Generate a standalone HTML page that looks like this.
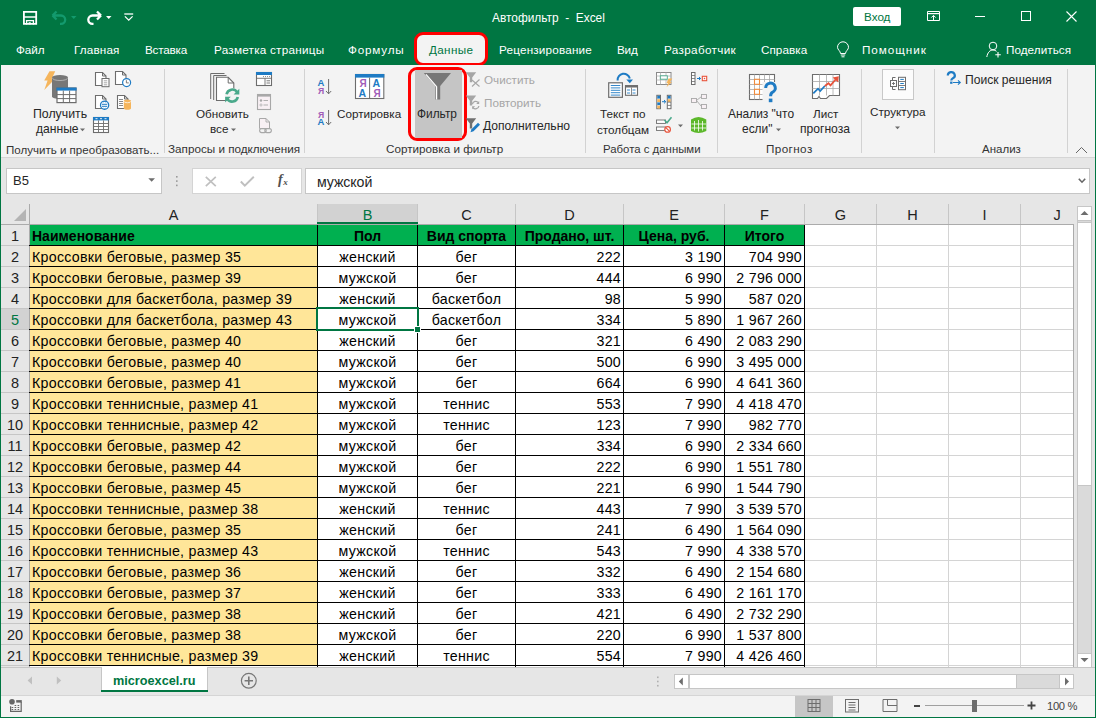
<!DOCTYPE html>
<html><head><meta charset="utf-8">
<style>
*{margin:0;padding:0;box-sizing:border-box}
html,body{width:1096px;height:718px;overflow:hidden;background:#e6e6e6;font-family:"Liberation Sans",sans-serif}
.a{position:absolute}
svg{position:absolute;overflow:visible}
.tt{position:absolute;color:#fff;font-size:11.7px;white-space:nowrap;line-height:14px}
.rt{position:absolute;color:#262626;font-size:11.7px;white-space:nowrap;line-height:14px}
.gl{position:absolute;color:#333;font-size:11.7px;white-space:nowrap;line-height:14px}
.sep{position:absolute;width:1px;top:69px;height:84px;background:#d2d2d2}
.ch{position:absolute;top:204px;height:20px;text-align:center;font-size:14.5px;color:#222;line-height:23px;border-right:1px solid #c6c6c6}
.rh{position:absolute;left:1px;width:28px;height:21px;text-align:center;font-size:14.5px;color:#222;line-height:23px;border-bottom:1px solid #c6c6c6}
.cell{position:absolute;height:20px;font-size:14.2px;letter-spacing:0.28px;line-height:23px;white-space:nowrap;color:#000;overflow:hidden}
</style></head><body>
<!-- title bar -->
<div class="a" style="left:0;top:0;width:1096px;height:65px;background:#007642"></div>
<svg style="left:22px;top:10px" width="16" height="16" viewBox="22 10 16 16"><path d="M23.9 11.9H36.2V23.9H23.9Z" fill="none" stroke="#fff" stroke-width="1.8"/><path d="M23.5 17H36.6" stroke="#fff" stroke-width="1.5"/><path d="M26.6 24.4V20.65H33.4V24.4" fill="none" stroke="#fff" stroke-width="1.3"/><path d="M28.7 22.2H30.7V24.4H28.7Z" fill="#fff"/></svg>
<svg style="left:51px;top:10px" width="18" height="16" viewBox="0 0 18 16"><path d="M1.5 5.5L5.5 1.5M1.5 5.5L5.5 9.5M1.5 5.5H10A4.2 4.2 0 0 1 10 13.9H9" fill="none" stroke="#139a6e" stroke-width="2.3"/></svg>
<svg style="left:71px;top:16px" width="6" height="4" viewBox="0 0 6 4"><path d="M0 0H5.5L2.75 3Z" fill="#139a6e"/></svg>
<svg style="left:85px;top:10px" width="18" height="16" viewBox="0 0 18 16"><path d="M16 5.5L12 1.5M16 5.5L12 9.5M16 5.5H7.5A4.2 4.2 0 0 0 7.5 13.9H8.5" fill="none" stroke="#fff" stroke-width="2.3"/></svg>
<svg style="left:106px;top:16px" width="6" height="4" viewBox="0 0 6 4"><path d="M0 0H5.5L2.75 3Z" fill="#fff"/></svg>
<svg style="left:124px;top:13px" width="10" height="8" viewBox="0 0 10 8"><path d="M0.3 1H9.2" stroke="#fff" stroke-width="1.3"/><path d="M0.9 3.4L4.75 7.1L8.6 3.4" fill="none" stroke="#fff" stroke-width="1.3"/></svg>
<div class="tt" style="left:492px;top:11px;font-size:11.9px">Автофильтр&nbsp; -&nbsp; Excel</div>
<div class="a" style="left:853px;top:7px;width:48px;height:19px;background:#fff;border-radius:2px"></div>
<div class="tt" style="left:864px;top:10px;color:#007642">Вход</div>
<svg style="left:926px;top:10px" width="15" height="13" viewBox="926 10 15 13"><path d="M927.5 11.5H939.5V20.5H927.5Z" fill="none" stroke="#fff" stroke-width="1"/><path d="M927.5 13.6H939.5" stroke="#fff" stroke-width="1.2"/><path d="M933.5 15.6V20.5M931.3 17.6L933.5 15.4L935.7 17.6" fill="none" stroke="#fff" stroke-width="1"/></svg>
<div class="a" style="left:975px;top:16px;width:10px;height:1px;background:#fff"></div>
<div class="a" style="left:1021px;top:11px;width:10px;height:10px;border:1px solid #fff"></div>
<svg style="left:1066px;top:11px" width="11" height="11" viewBox="0 0 11 11"><path d="M0.5 0.5L10.5 10.5M10.5 0.5L0.5 10.5" stroke="#fff" stroke-width="1.1"/></svg>
<div class="tt" style="left:16px;top:43px;letter-spacing:-0.05px">Файл</div>
<div class="tt" style="left:74px;top:43px;letter-spacing:0.15px">Главная</div>
<div class="tt" style="left:145px;top:43px;letter-spacing:-0.2px">Вставка</div>
<div class="tt" style="left:214px;top:43px;letter-spacing:0.25px">Разметка страницы</div>
<div class="tt" style="left:348px;top:43px;letter-spacing:0.8px">Формулы</div>
<div class="tt" style="left:499px;top:43px;letter-spacing:0.2px">Рецензирование</div>
<div class="tt" style="left:617px;top:43px;letter-spacing:-0.2px">Вид</div>
<div class="tt" style="left:664px;top:43px;letter-spacing:0.35px">Разработчик</div>
<div class="tt" style="left:761px;top:43px;letter-spacing:0.05px">Справка</div>
<div class="tt" style="left:862px;top:43px;letter-spacing:0.95px">Помощник</div>
<div class="tt" style="left:1006px;top:43px;letter-spacing:0.05px">Поделиться</div>
<div class="a" style="left:414px;top:32px;width:74px;height:34px;background:#f3f3f3;border:3px solid #f00;border-radius:9px"></div>
<div class="tt" style="left:429px;top:43px;color:#007642;letter-spacing:0.35px">Данные</div>
<svg style="left:836px;top:42px" width="14" height="16" viewBox="0 0 14 16"><path d="M4.5 11.5C4.5 9 1.5 7.8 1.5 5.3A5.5 5.5 0 0 1 12.5 5.3C12.5 7.8 9.5 9 9.5 11.5Z" fill="none" stroke="#fff" stroke-width="1"/><path d="M4.8 13H9.2M5.5 14.8H8.5" stroke="#fff" stroke-width="1"/></svg>
<svg style="left:986px;top:41px" width="16" height="17" viewBox="0 0 16 17"><circle cx="7" cy="5" r="3.8" fill="none" stroke="#fff" stroke-width="1"/><path d="M0.8 16C1.5 11.5 4 9 7 9C8.5 9 9.5 9.5 10.5 10.3" fill="none" stroke="#fff" stroke-width="1"/><path d="M12 11V16.5M9.3 13.7H14.8" stroke="#fff" stroke-width="1.1"/></svg>
<!-- ribbon -->
<div class="a" style="left:1px;top:65px;width:1094px;height:93px;background:#f3f3f3;border-bottom:1px solid #d5d5d5"></div>
<div class="sep" style="left:164px"></div>
<div class="sep" style="left:304px"></div>
<div class="sep" style="left:585px"></div>
<div class="sep" style="left:717px"></div>
<div class="sep" style="left:861px"></div>
<div class="sep" style="left:934px"></div>
<div class="sep" style="left:1067px"></div>
<svg style="left:40px;top:68px" width="40" height="40" viewBox="40 68 40 40">
<path d="M49.5 71.2H55.2L51.6 79.2H54.6L44.3 90L47.6 80.6H44.2Z" fill="#f5b55c"/>
<path d="M52 77.5A8 2.6 0 0 1 68 77.5V96.5A8 2.6 0 0 1 52 96.5Z" fill="#777"/>
<path d="M52.6 78.3A7.4 2.2 0 0 0 67.4 78.3" fill="none" stroke="#b8b8b8" stroke-width="0.9"/>
<rect x="57" y="88" width="19" height="14.6" fill="#fff" stroke="#6d6d6d" stroke-width="1.2"/>
<rect x="56.4" y="87.6" width="20.2" height="3" fill="#1e7bc4"/>
<path d="M63.3 90.6V102.6M69.6 90.6V102.6M57 94.6H76M57 98.6H76" stroke="#6d6d6d" stroke-width="1"/>
</svg>
<div class="rt" style="left:33px;top:107px;font-size:12.3px">Получить</div>
<div class="rt" style="left:36px;top:122px;font-size:12.1px">данные</div>
<svg style="left:80px;top:128px" width="6" height="4" viewBox="0 0 6 4"><path d="M0 0.5H5L2.5 3.2Z" fill="#6d6d6d"/></svg>
<svg style="left:90px;top:68px" width="45" height="70" viewBox="90 68 45 70">
<path d="M95.5 72.5H102.5L106.0 76.0V85.5H95.5Z" fill="#fff" stroke="#6d6d6d" stroke-width="1.1"/><path d="M102.5 72.5V76.0H106.0" fill="none" stroke="#6d6d6d" stroke-width="1"/>
<rect x="102" y="78.5" width="7" height="8.2" fill="#fff" stroke="#6d6d6d" stroke-width="1"/>
<path d="M103.8 80.8H107.2M103.8 82.8H107.2M103.8 84.8H107.2" stroke="#6d6d6d" stroke-width="0.6"/>
<path d="M115.5 71.5H122.5L126.0 75.0V84.5H115.5Z" fill="#fff" stroke="#6d6d6d" stroke-width="1.1"/><path d="M122.5 71.5V75.0H126.0" fill="none" stroke="#6d6d6d" stroke-width="1"/>
<circle cx="126.6" cy="82.6" r="4" fill="#fff" stroke="#1e7bc4" stroke-width="1.2"/>
<path d="M126.4 80.2V82.9H128.8" fill="none" stroke="#6d6d6d" stroke-width="0.9"/>
<path d="M95.5 95.5H102.5L106.0 99.0V108.5H95.5Z" fill="#fff" stroke="#6d6d6d" stroke-width="1.1"/><path d="M102.5 95.5V99.0H106.0" fill="none" stroke="#6d6d6d" stroke-width="1"/>
<circle cx="104.6" cy="105.2" r="4.1" fill="#fff" stroke="#1e7bc4" stroke-width="1.3"/>
<path d="M102 104.3H107.2M102 106.3H107.2" stroke="#1e7bc4" stroke-width="1"/>
<path d="M103.6 102.2L104.6 101.4L105.6 102.2M103.6 108.2L104.6 109L105.6 108.2" fill="none" stroke="#1e7bc4" stroke-width="0.8"/>
<path d="M117.5 95.5H124.5L128.0 99.0V108.5H117.5Z" fill="#fff" stroke="#6d6d6d" stroke-width="1.1"/><path d="M124.5 95.5V99.0H128.0" fill="none" stroke="#6d6d6d" stroke-width="1"/>
<path d="M119 99.5H123M119 101.5H123M119 103.5H123M119 105.5H123" stroke="#6d6d6d" stroke-width="0.8"/>
<path d="M123.8 101A3.6 1.5 0 0 1 131 101V108.2A3.6 1.5 0 0 1 123.8 108.2Z" fill="#f5b55c"/>
<path d="M123.8 101.2A3.6 1.5 0 0 0 131 101.2" fill="none" stroke="#fff" stroke-width="0.7"/>
<rect x="93.5" y="117.5" width="15" height="15" fill="#fff" stroke="#6d6d6d" stroke-width="1.1"/>
<rect x="93" y="117" width="16" height="3.4" fill="#1e7bc4"/>
<path d="M95.5 118.7H97.5M100 118.7H102M104.5 118.7H106.5" stroke="#fff" stroke-width="0.9"/>
<path d="M98.5 120.4V132.5M103.5 120.4V132.5M93.5 123.5H108.5M93.5 126.5H108.5M93.5 129.5H108.5" stroke="#6d6d6d" stroke-width="0.9"/>
</svg>
<div class="gl" style="left:6px;top:143px;font-size:11.55px">Получить и преобразовать...</div>
<svg style="left:205px;top:68px" width="70" height="68" viewBox="205 68 70 68">
<path d="M210.7 99V73.5H224.5" fill="none" stroke="#6d6d6d" stroke-width="1"/>
<path d="M213.7 100V75.5H226.5" fill="none" stroke="#6d6d6d" stroke-width="1"/>
<path d="M216.5 77.3H228.2L233.8 83V100.5H216.5Z" fill="#fff" stroke="#6d6d6d" stroke-width="1.1"/>
<path d="M228.2 77.3V83H233.8" fill="none" stroke="#6d6d6d" stroke-width="1"/>
<circle cx="232.2" cy="95.6" r="7.5" fill="#f3f3f3"/>
<path d="M226.6 94.2A5.8 5.8 0 0 1 237.2 92.3" fill="none" stroke="#4aa98b" stroke-width="2.6"/>
<path d="M237.8 97A5.8 5.8 0 0 1 227.2 98.9" fill="none" stroke="#4aa98b" stroke-width="2.6"/>
<path d="M239.3 88.8V94.5H233.6Z" fill="#4aa98b"/>
<path d="M225.1 102.4V96.7H230.8Z" fill="#4aa98b"/>
<rect x="256.5" y="72.5" width="15" height="13" fill="#fff" stroke="#6d6d6d" stroke-width="1.1"/>
<rect x="256" y="72" width="16" height="3" fill="#1e7bc4"/>
<path d="M256.5 78.3H271.5M265 78.3V85.5M266.5 80.8H270M266.5 83H270" stroke="#6d6d6d" stroke-width="0.9"/>
<path d="M263 76.6H263.9M265 76.6H265.9M267 76.6H267.9M269 76.6H269.9" stroke="#6d6d6d" stroke-width="0.9"/>
<rect x="257.5" y="94.5" width="13" height="15" fill="#f8f0f4" stroke="#a8a8a8" stroke-width="1.1"/>
<rect x="257" y="94" width="14" height="2.6" fill="#a8a8a8"/>
<circle cx="261" cy="100.5" r="1.2" fill="#a8a8a8"/><circle cx="261" cy="105" r="1.1" fill="none" stroke="#a8a8a8" stroke-width="0.7"/>
<path d="M263.5 100.5H268M263.5 105H268" stroke="#a8a8a8" stroke-width="0.9"/>
<path d="M259.5 118.5H266L269.5 122V128.5H259.5Z" fill="#f8f0f4" stroke="#a8a8a8" stroke-width="1"/>
<path d="M266 118.5V122H269.5" fill="none" stroke="#a8a8a8" stroke-width="0.9"/>
<rect x="259.6" y="128.6" width="6.6" height="4" rx="2" fill="#f3f3f3" stroke="#a8a8a8" stroke-width="1.1"/>
<rect x="264.8" y="128.6" width="6.6" height="4" rx="2" fill="none" stroke="#a8a8a8" stroke-width="1.1"/>
</svg>
<div class="rt" style="left:196px;top:107px;">Обновить</div>
<div class="rt" style="left:210px;top:122px;">все</div>
<svg style="left:231px;top:128px" width="6" height="4" viewBox="0 0 6 4"><path d="M0 0.5H5L2.5 3.2Z" fill="#6d6d6d"/></svg>
<div class="gl" style="left:168px;top:142px;font-size:11.7px">Запросы и подключения</div>
<svg style="left:312px;top:70px" width="80" height="60" viewBox="312 70 80 60">
<text x="317.6" y="86" font-family="Liberation Sans" font-weight="bold" font-size="9.5" fill="#1e7bc4">A</text>
<text x="318" y="93.8" font-family="Liberation Sans" font-weight="bold" font-size="8.6" fill="#a05cb8">Я</text>
<path d="M328.6 79V93.8M326 91L328.6 93.8L331.2 91" fill="none" stroke="#6d6d6d" stroke-width="1"/>
<text x="318" y="117.5" font-family="Liberation Sans" font-weight="bold" font-size="8.6" fill="#a05cb8">Я</text>
<text x="317.6" y="125" font-family="Liberation Sans" font-weight="bold" font-size="9.5" fill="#1e7bc4">A</text>
<path d="M328.6 110V124.8M326 122L328.6 124.8L331.2 122" fill="none" stroke="#6d6d6d" stroke-width="1"/>
<rect x="355.5" y="74.5" width="28.3" height="24" fill="#fff" stroke="#6d6d6d" stroke-width="1.1"/>
<rect x="355" y="74" width="29.3" height="3.6" fill="#1e7bc4"/>
<path d="M369.6 77.6V98.5" stroke="#6d6d6d" stroke-width="1"/>
<text x="359.4" y="87" font-family="Liberation Sans" font-weight="bold" font-size="10" fill="#a05cb8">Я</text>
<text x="358.4" y="97" font-family="Liberation Sans" font-weight="bold" font-size="10.5" fill="#1e7bc4">A</text>
<text x="372.4" y="87" font-family="Liberation Sans" font-weight="bold" font-size="10.5" fill="#1e7bc4">A</text>
<text x="373.4" y="97" font-family="Liberation Sans" font-weight="bold" font-size="10" fill="#a05cb8">Я</text>
</svg>
<div class="rt" style="left:337px;top:106.5px;">Сортировка</div>
<div class="a" style="left:408px;top:67px;width:58.5px;height:74px;border:3px solid #f00;border-radius:9px;background:#f3f3f3"></div>
<div class="a" style="left:415px;top:70px;width:47px;height:68px;background:#c5c5c5"></div>
<svg style="left:420px;top:70px" width="36" height="34" viewBox="420 70 36 34">
<path d="M423.8 73H451L440.2 86V99.6H435.4V86Z" fill="#777"/>
<path d="M426 74.3L436.6 86.6V99.4" fill="none" stroke="#fff" stroke-width="1.2"/>
</svg>
<div class="rt" style="left:417px;top:107px;font-size:11.9px">Фильтр</div>
<svg style="left:463px;top:70px" width="20" height="66" viewBox="463 70 20 66">
<path d="M465.8 72.3H476.2L472.2 77.5V82.2H469.8V77.5Z" fill="#a6a6a6"/>
<path d="M472 80L479.5 86.5M479.5 79.5L472 86.5" stroke="#a6a6a6" stroke-width="1.1"/>
<path d="M465.8 95.5H476.2L472.2 100.7V105.5H469.8V100.7Z" fill="#a6a6a6"/>
<path d="M472.4 104.2A3.4 3.4 0 0 1 478.4 102.6" fill="none" stroke="#a6a6a6" stroke-width="1.3"/>
<path d="M479.2 101V104H476.2Z" fill="#a6a6a6"/>
<path d="M478.9 106A3.4 3.4 0 0 1 472.9 107.6" fill="none" stroke="#a6a6a6" stroke-width="1.3"/>
<path d="M472.1 109.2V106.2H475.1Z" fill="#a6a6a6"/>
<path d="M465.8 118.2H476.2L472.2 123.4V128.6H469.8V123.4Z" fill="#707070"/>
<path d="M470.5 132.3L471.5 129.2L478 122.8L480 124.8L473.5 131.2Z" fill="#1e7bc4"/>
</svg>
<div class="rt" style="left:484px;top:73px;color:#a6a6a6">Очистить</div>
<div class="rt" style="left:484px;top:96px;color:#a6a6a6">Повторить</div>
<div class="rt" style="left:483px;top:118.5px;font-size:12.1px">Дополнительно</div>
<div class="gl" style="left:386px;top:142px;font-size:11.7px">Сортировка и фильтр</div>
<svg style="left:605px;top:70px" width="105" height="66" viewBox="605 70 105 66">
<path d="M617.6 80.5A6.2 6.2 0 0 1 629.8 78.5" fill="none" stroke="#1e7bc4" stroke-width="2"/>
<path d="M626.3 79.5H633L629.8 83.3Z" fill="#1e7bc4"/>
<rect x="608.7" y="82.8" width="13.7" height="14.5" fill="#fff" stroke="#6d6d6d" stroke-width="1.2"/>
<path d="M610.8 85.5H620.3M610.8 87.9H620.3M610.8 90.3H620.3M610.8 92.7H620.3M610.8 95.1H620.3" stroke="#1e7bc4" stroke-width="0.9"/>
<rect x="625.5" y="85.7" width="12" height="9.6" fill="#fff" stroke="#6d6d6d" stroke-width="1.1"/>
<rect x="625" y="85.2" width="13" height="2.3" fill="#6d6d6d"/>
<path d="M627 90H630M632.5 90H635.5M627 93H630M632.5 93H635.5" stroke="#1e7bc4" stroke-width="0.9"/>
<path d="M631.5 87.5V95.3" stroke="#6d6d6d" stroke-width="0.8"/>
<rect x="656.5" y="72.5" width="14.5" height="12" fill="#fff" stroke="#8a8a8a" stroke-width="1"/>
<path d="M656.5 76H671M656.5 80H671M660.5 72.5V84.5M666 72.5V84.5" stroke="#b0b0b0" stroke-width="0.8"/>
<rect x="660.3" y="75.8" width="7" height="3.4" fill="#fff" stroke="#4aa98b" stroke-width="0.9"/>
<path d="M668.5 78.5H672.3L670 82H671.8L666.5 87.2L668.2 83.3H666.5Z" fill="#f5b55c"/>
<rect x="656.8" y="95.3" width="3.7" height="13.4" fill="#fff" stroke="#6d6d6d" stroke-width="1"/>
<rect x="657.3" y="95.8" width="2.7" height="2.8" fill="#1e7bc4"/><rect x="657.3" y="99.2" width="2.7" height="2.8" fill="#f5b55c"/><rect x="657.3" y="102.4" width="2.7" height="2.8" fill="#1e7bc4"/><rect x="657.3" y="105.6" width="2.7" height="2.8" fill="#f5b55c"/>
<rect x="667.3" y="95.3" width="3.7" height="13.4" fill="#fff" stroke="#6d6d6d" stroke-width="1"/>
<rect x="667.8" y="95.8" width="2.7" height="2.8" fill="#1e7bc4"/><rect x="667.8" y="99.2" width="2.7" height="2.8" fill="#f5b55c"/>
<path d="M667.3 102.2H671M667.3 105.4H671" stroke="#6d6d6d" stroke-width="0.8"/>
<path d="M662 101.7H665.5M664 100L665.8 101.7L664 103.4" fill="none" stroke="#1e7bc4" stroke-width="1"/>
<rect x="656.5" y="120" width="9" height="3.4" fill="#fff" stroke="#6d6d6d" stroke-width="0.9"/>
<rect x="656.5" y="127" width="9" height="3.4" fill="#fff" stroke="#6d6d6d" stroke-width="0.9"/>
<path d="M664.5 120L667 122.7L671.5 117.3" fill="none" stroke="#4aa98b" stroke-width="1.6"/>
<circle cx="667.6" cy="129.4" r="2.8" fill="#fff" stroke="#e8533b" stroke-width="1.2"/>
<path d="M665.8 127.6L669.4 131.2" stroke="#e8533b" stroke-width="1.1"/>
<rect x="691.5" y="72.5" width="3.5" height="12" fill="#fff" stroke="#6d6d6d" stroke-width="1"/>
<path d="M691.5 75.5H695M691.5 78.5H695M691.5 81.5H695" stroke="#6d6d6d" stroke-width="0.8"/>
<path d="M697 78.5H700.5M699 77L700.6 78.5L699 80" fill="none" stroke="#1e7bc4" stroke-width="1"/>
<rect x="702.3" y="76.3" width="4.4" height="4.4" fill="#fff" stroke="#e8533b" stroke-width="1.1"/>
<rect x="703.8" y="77.8" width="1.4" height="1.4" fill="#e8533b"/>
<rect x="691.5" y="98.5" width="5" height="4" fill="#f8f0f4" stroke="#a8a8a8" stroke-width="0.9"/>
<rect x="701.5" y="94.5" width="5" height="4" fill="#f8f0f4" stroke="#a8a8a8" stroke-width="0.9"/>
<rect x="701.5" y="104.5" width="5" height="4" fill="#f8f0f4" stroke="#a8a8a8" stroke-width="0.9"/>
<path d="M696.5 100.5L701.5 96.5M696.5 100.5L701.5 106.5" stroke="#a8a8a8" stroke-width="0.9"/>
<path d="M691 119.5Q698.5 114.5 706.3 119.5V131Q698.5 135 691 131Z" fill="#5cb82a"/>
<path d="M694.5 121V130.5M698.5 120V131.5M702.5 121V130.5M691.5 124H706M691.5 128H706" stroke="#fff" stroke-width="0.8"/>
</svg>
<svg style="left:678px;top:124px" width="6" height="4" viewBox="0 0 6 4"><path d="M0 0.5H5L2.5 3.2Z" fill="#6d6d6d"/></svg>
<div class="rt" style="left:600px;top:106.5px;">Текст по</div>
<div class="rt" style="left:597px;top:122.5px;">столбцам</div>
<div class="gl" style="left:603px;top:142px;font-size:11.4px">Работа с данными</div>
<svg style="left:745px;top:70px" width="100" height="36" viewBox="745 70 100 36">
<rect x="749.5" y="74.5" width="25" height="25" fill="#fff" stroke="#6d6d6d" stroke-width="1.1"/>
<path d="M754.5 74.5V99.5M759.5 74.5V99.5M764.5 74.5V99.5M769.5 74.5V99.5M749.5 79.5H774.5M749.5 84.5H774.5M749.5 89.5H774.5M749.5 94.5H774.5" stroke="#a8a8a8" stroke-width="0.8"/>
<rect x="754.5" y="79.3" width="5" height="5" fill="#fff" stroke="#f08a3a" stroke-width="1.1"/>
<rect x="754.5" y="89.3" width="5" height="5" fill="#fff" stroke="#f08a3a" stroke-width="1.1"/>
<path d="M762.5 82H778V103H762.5Z" fill="#f3f3f3"/>
<path d="M765.7 88A4.8 4.8 0 1 1 772.4 92.3C770.8 93.1 770.6 94.3 770.6 96.3" fill="none" stroke="#1e7bc4" stroke-width="3"/>
<rect x="768.8" y="98.6" width="3.6" height="3.6" fill="#1e7bc4"/>
<path d="M812.5 74.5H839.5V95.5H829.5L826.5 98.5H820.5L819 96.5L817.5 98.5H812.5Z" fill="#fff" stroke="#6d6d6d" stroke-width="1.1"/>
<path d="M819.5 74.5V95.5M826.5 74.5V95.5M833 74.5V95.5M812.5 81.5H839.5M812.5 88.5H839.5" stroke="#a8a8a8" stroke-width="0.8"/>
<path d="M813.3 93.3L818 88.7L820.2 91L824.8 86" fill="none" stroke="#1e7bc4" stroke-width="1.8"/>
<path d="M824.8 86L828.5 83.2L830.5 85.3L836.5 78.5" fill="none" stroke="#e8533b" stroke-width="1.8"/>
<path d="M838.8 76.3L838.2 82.5L832.6 77.5Z" fill="#e8533b"/>
</svg>
<div class="rt" style="left:728px;top:107px;font-size:11.95px">Анализ "что</div>
<div class="rt" style="left:742px;top:122px;font-size:11.95px">если"</div>
<svg style="left:776px;top:128px" width="6" height="4" viewBox="0 0 6 4"><path d="M0 0.5H5L2.5 3.2Z" fill="#6d6d6d"/></svg>
<div class="rt" style="left:813px;top:107px;">Лист</div>
<div class="rt" style="left:800px;top:122px;font-size:12.1px">прогноза</div>
<div class="gl" style="left:766px;top:142px;font-size:11.7px;letter-spacing:0.4px">Прогноз</div>
<div class="a" style="left:882px;top:69px;width:32px;height:31px;background:#fcfcfc;border:1px solid #c8c8c8"></div>
<svg style="left:886px;top:74px" width="24" height="20" viewBox="886 74 24 20">
<rect x="890.5" y="80.5" width="6" height="6" fill="#fff" stroke="#6d6d6d" stroke-width="1"/>
<path d="M893.5 82V85M892 83.5H895" stroke="#6d6d6d" stroke-width="0.9"/>
<path d="M892.5 80V77.5H895.5M892.5 87V89.5H895.5" fill="none" stroke="#6d6d6d" stroke-width="1"/>
<rect x="898.5" y="77.3" width="7" height="12.4" fill="#fff" stroke="#6d6d6d" stroke-width="1"/>
<path d="M898.5 81.5H905.5M898.5 85.5H905.5" stroke="#6d6d6d" stroke-width="0.9"/>
<path d="M900.3 79.4H903.8M900.3 83.5H903.8M900.3 87.6H903.8" stroke="#1e7bc4" stroke-width="1"/>
</svg>
<div class="rt" style="left:870px;top:105px;font-size:11.7px">Структура</div>
<svg style="left:895px;top:126px" width="6" height="4" viewBox="0 0 6 4"><path d="M0 0.5H5L2.5 3.2Z" fill="#6d6d6d"/></svg>
<svg style="left:944px;top:70px" width="20" height="16" viewBox="944 70 20 16">
<path d="M947.8 75.4A3.5 3.3 0 1 1 952.9 78.3C951.6 79 951.3 79.7 951.3 80.5" fill="none" stroke="#1e7bc4" stroke-width="2.2"/>
<rect x="950.1" y="81.6" width="2.4" height="2.2" fill="#1e7bc4"/>
<path d="M953 82.5H960.2M958 80.3L960.3 82.5L958 84.7" fill="none" stroke="#1e7bc4" stroke-width="1.1"/>
</svg>
<div class="rt" style="left:965px;top:73px;font-size:12.1px">Поиск решения</div>
<div class="gl" style="left:982px;top:142.4px;font-size:11.5px">Анализ</div>
<svg style="left:1075px;top:146px" width="13" height="8" viewBox="0 0 13 8"><path d="M1 7L6.5 1.5L12 7" fill="none" stroke="#666" stroke-width="1"/></svg>
<!-- formula bar -->
<div class="a" style="left:6px;top:168px;width:156px;height:26px;background:#fff;border:1px solid #c6c6c6"></div>
<div class="a" style="left:192px;top:168px;width:110px;height:26px;background:#fff;border:1px solid #d4d4d4"></div>
<div class="a" style="left:305px;top:168px;width:785px;height:26px;background:#fff;border:1px solid #c6c6c6"></div>
<div class="a" style="left:13px;top:174px;font-size:13px;color:#262626;line-height:14px">B5</div>
<svg style="left:148px;top:178px" width="8" height="5" viewBox="0 0 8 5"><path d="M0.3 0.3H7L3.65 3.8Z" fill="#6d6d6d"/></svg>
<svg style="left:175px;top:175px" width="4" height="13" viewBox="0 0 4 13"><rect x="1" y="1" width="1.6" height="1.6" fill="#9a9a9a"/><rect x="1" y="5.3" width="1.6" height="1.6" fill="#9a9a9a"/><rect x="1" y="9.6" width="1.6" height="1.6" fill="#9a9a9a"/></svg>
<svg style="left:205px;top:176px" width="12" height="11" viewBox="0 0 12 11"><path d="M0.8 0.8L10.8 10.2M10.8 0.8L0.8 10.2" stroke="#c0c0c0" stroke-width="1.7"/></svg>
<svg style="left:240px;top:176px" width="15" height="11" viewBox="0 0 15 11"><path d="M0.8 5.5L4.8 9.6L13.8 0.8" fill="none" stroke="#c0c0c0" stroke-width="2"/></svg>
<div class="a" style="left:278px;top:172px;font-family:'Liberation Serif',serif;font-style:italic;font-weight:bold;font-size:14px;color:#505050;line-height:16px">f<span style="font-size:9px;position:relative;top:1px;left:0.5px">x</span></div>
<div class="a" style="left:317px;top:174px;font-size:14.2px;letter-spacing:-0.1px;color:#262626;line-height:16px">мужской</div>
<svg style="left:1078px;top:178px" width="9" height="6" viewBox="0 0 9 6"><path d="M0.8 0.8L4 4.2L7.2 0.8" fill="none" stroke="#666" stroke-width="1.6"/></svg>
<div class="a" style="left:1px;top:204px;width:1072px;height:20px;background:#e6e6e6"></div>
<svg class="a" style="left:13px;top:208px" width="14" height="14"><path d="M13 1 L13 13 L1 13 Z" fill="#b4b4b4"/></svg>
<div class="ch" style="left:30px;width:288px;background:transparent;color:#222">A</div>
<div class="ch" style="left:318px;width:100px;background:#d2d2d2;color:#007642">B</div>
<div class="a" style="left:317px;top:222px;width:101px;height:2px;background:#007642"></div>
<div class="ch" style="left:418px;width:98px;background:transparent;color:#222">C</div>
<div class="ch" style="left:516px;width:108px;background:transparent;color:#222">D</div>
<div class="ch" style="left:624px;width:101px;background:transparent;color:#222">E</div>
<div class="ch" style="left:725px;width:80px;background:transparent;color:#222">F</div>
<div class="ch" style="left:805px;width:72px;background:transparent;color:#222">G</div>
<div class="ch" style="left:877px;width:72px;background:transparent;color:#222">H</div>
<div class="ch" style="left:949px;width:72px;background:transparent;color:#222">I</div>
<div class="a" style="left:1021px;top:204px;width:52px;height:20px;overflow:hidden"><div class="ch" style="left:0;top:0;width:72px;border-right:none;color:#222">J</div></div>
<div class="a" style="left:1px;top:224px;width:1073px;height:1px;background:#ababab"></div>
<div class="a" style="left:30px;top:225px;width:1043px;height:442px;background:#fff"></div>
<div class="rh" style="top:225px;background:#e6e6e6;color:#222">1</div>
<div class="rh" style="top:246px;background:#e6e6e6;color:#222">2</div>
<div class="rh" style="top:267px;background:#e6e6e6;color:#222">3</div>
<div class="rh" style="top:288px;background:#e6e6e6;color:#222">4</div>
<div class="rh" style="top:309px;background:#d2d2d2;color:#007642">5</div>
<div class="rh" style="top:330px;background:#e6e6e6;color:#222">6</div>
<div class="rh" style="top:351px;background:#e6e6e6;color:#222">7</div>
<div class="rh" style="top:372px;background:#e6e6e6;color:#222">8</div>
<div class="rh" style="top:393px;background:#e6e6e6;color:#222">9</div>
<div class="rh" style="top:414px;background:#e6e6e6;color:#222">10</div>
<div class="rh" style="top:435px;background:#e6e6e6;color:#222">11</div>
<div class="rh" style="top:456px;background:#e6e6e6;color:#222">12</div>
<div class="rh" style="top:477px;background:#e6e6e6;color:#222">13</div>
<div class="rh" style="top:498px;background:#e6e6e6;color:#222">14</div>
<div class="rh" style="top:519px;background:#e6e6e6;color:#222">15</div>
<div class="rh" style="top:540px;background:#e6e6e6;color:#222">16</div>
<div class="rh" style="top:561px;background:#e6e6e6;color:#222">17</div>
<div class="rh" style="top:582px;background:#e6e6e6;color:#222">18</div>
<div class="rh" style="top:603px;background:#e6e6e6;color:#222">19</div>
<div class="rh" style="top:624px;background:#e6e6e6;color:#222">20</div>
<div class="rh" style="top:645px;background:#e6e6e6;color:#222">21</div>
<div class="a" style="left:29px;top:204px;width:1px;height:463px;background:#ababab"></div>
<div class="a" style="left:805px;top:245px;width:268px;height:1px;background:#d4d4d4"></div>
<div class="a" style="left:805px;top:266px;width:268px;height:1px;background:#d4d4d4"></div>
<div class="a" style="left:805px;top:287px;width:268px;height:1px;background:#d4d4d4"></div>
<div class="a" style="left:805px;top:308px;width:268px;height:1px;background:#d4d4d4"></div>
<div class="a" style="left:805px;top:329px;width:268px;height:1px;background:#d4d4d4"></div>
<div class="a" style="left:805px;top:350px;width:268px;height:1px;background:#d4d4d4"></div>
<div class="a" style="left:805px;top:371px;width:268px;height:1px;background:#d4d4d4"></div>
<div class="a" style="left:805px;top:392px;width:268px;height:1px;background:#d4d4d4"></div>
<div class="a" style="left:805px;top:413px;width:268px;height:1px;background:#d4d4d4"></div>
<div class="a" style="left:805px;top:434px;width:268px;height:1px;background:#d4d4d4"></div>
<div class="a" style="left:805px;top:455px;width:268px;height:1px;background:#d4d4d4"></div>
<div class="a" style="left:805px;top:476px;width:268px;height:1px;background:#d4d4d4"></div>
<div class="a" style="left:805px;top:497px;width:268px;height:1px;background:#d4d4d4"></div>
<div class="a" style="left:805px;top:518px;width:268px;height:1px;background:#d4d4d4"></div>
<div class="a" style="left:805px;top:539px;width:268px;height:1px;background:#d4d4d4"></div>
<div class="a" style="left:805px;top:560px;width:268px;height:1px;background:#d4d4d4"></div>
<div class="a" style="left:805px;top:581px;width:268px;height:1px;background:#d4d4d4"></div>
<div class="a" style="left:805px;top:602px;width:268px;height:1px;background:#d4d4d4"></div>
<div class="a" style="left:805px;top:623px;width:268px;height:1px;background:#d4d4d4"></div>
<div class="a" style="left:805px;top:644px;width:268px;height:1px;background:#d4d4d4"></div>
<div class="a" style="left:805px;top:665px;width:268px;height:1px;background:#d4d4d4"></div>
<div class="a" style="left:876px;top:225px;width:1px;height:442px;background:#d4d4d4"></div>
<div class="a" style="left:948px;top:225px;width:1px;height:442px;background:#d4d4d4"></div>
<div class="a" style="left:1020px;top:225px;width:1px;height:442px;background:#d4d4d4"></div>
<div class="a" style="left:1073px;top:225px;width:1px;height:442px;background:#ababab"></div>
<div class="cell" style="left:30px;top:225px;width:287px;background:#00b050;text-align:left;font-weight:bold;font-size:14px;letter-spacing:0px;padding:0 2px">Наименование</div>
<div class="cell" style="left:318px;top:225px;width:99px;background:#00b050;text-align:center;font-weight:bold;font-size:14px;letter-spacing:0px;padding:0 2px">Пол</div>
<div class="cell" style="left:418px;top:225px;width:97px;background:#00b050;text-align:center;font-weight:bold;font-size:14px;letter-spacing:0px;padding:0 2px">Вид спорта</div>
<div class="cell" style="left:516px;top:225px;width:107px;background:#00b050;text-align:center;font-weight:bold;font-size:14px;letter-spacing:0px;padding:0 2px">Продано, шт.</div>
<div class="cell" style="left:624px;top:225px;width:100px;background:#00b050;text-align:center;font-weight:bold;font-size:14px;letter-spacing:0px;padding:0 2px">Цена, руб.</div>
<div class="cell" style="left:725px;top:225px;width:79px;background:#00b050;text-align:center;font-weight:bold;font-size:14px;letter-spacing:0px;padding:0 2px">Итого</div>
<div class="cell" style="left:30px;top:246px;width:287px;background:#ffe699;text-align:left;font-weight:normal;padding:0 2px">Кроссовки беговые, размер 35</div>
<div class="cell" style="left:318px;top:246px;width:99px;background:#fff;text-align:center;font-weight:normal;padding:0 2px">женский</div>
<div class="cell" style="left:418px;top:246px;width:97px;background:#fff;text-align:center;font-weight:normal;padding:0 2px">бег</div>
<div class="cell" style="left:516px;top:246px;width:107px;background:#fff;text-align:right;font-weight:normal;padding:0 2px">222</div>
<div class="cell" style="left:624px;top:246px;width:100px;background:#fff;text-align:right;font-weight:normal;padding:0 2px">3 190</div>
<div class="cell" style="left:725px;top:246px;width:79px;background:#fff;text-align:right;font-weight:normal;padding:0 2px">704 990</div>
<div class="cell" style="left:30px;top:267px;width:287px;background:#ffe699;text-align:left;font-weight:normal;padding:0 2px">Кроссовки беговые, размер 39</div>
<div class="cell" style="left:318px;top:267px;width:99px;background:#fff;text-align:center;font-weight:normal;padding:0 2px">мужской</div>
<div class="cell" style="left:418px;top:267px;width:97px;background:#fff;text-align:center;font-weight:normal;padding:0 2px">бег</div>
<div class="cell" style="left:516px;top:267px;width:107px;background:#fff;text-align:right;font-weight:normal;padding:0 2px">444</div>
<div class="cell" style="left:624px;top:267px;width:100px;background:#fff;text-align:right;font-weight:normal;padding:0 2px">6 990</div>
<div class="cell" style="left:725px;top:267px;width:79px;background:#fff;text-align:right;font-weight:normal;padding:0 2px">2 796 000</div>
<div class="cell" style="left:30px;top:288px;width:287px;background:#ffe699;text-align:left;font-weight:normal;padding:0 2px">Кроссовки для баскетбола, размер 39</div>
<div class="cell" style="left:318px;top:288px;width:99px;background:#fff;text-align:center;font-weight:normal;padding:0 2px">женский</div>
<div class="cell" style="left:418px;top:288px;width:97px;background:#fff;text-align:center;font-weight:normal;padding:0 2px">баскетбол</div>
<div class="cell" style="left:516px;top:288px;width:107px;background:#fff;text-align:right;font-weight:normal;padding:0 2px">98</div>
<div class="cell" style="left:624px;top:288px;width:100px;background:#fff;text-align:right;font-weight:normal;padding:0 2px">5 990</div>
<div class="cell" style="left:725px;top:288px;width:79px;background:#fff;text-align:right;font-weight:normal;padding:0 2px">587 020</div>
<div class="cell" style="left:30px;top:309px;width:287px;background:#ffe699;text-align:left;font-weight:normal;padding:0 2px">Кроссовки для баскетбола, размер 43</div>
<div class="cell" style="left:318px;top:309px;width:99px;background:#fff;text-align:center;font-weight:normal;padding:0 2px">мужской</div>
<div class="cell" style="left:418px;top:309px;width:97px;background:#fff;text-align:center;font-weight:normal;padding:0 2px">баскетбол</div>
<div class="cell" style="left:516px;top:309px;width:107px;background:#fff;text-align:right;font-weight:normal;padding:0 2px">334</div>
<div class="cell" style="left:624px;top:309px;width:100px;background:#fff;text-align:right;font-weight:normal;padding:0 2px">5 890</div>
<div class="cell" style="left:725px;top:309px;width:79px;background:#fff;text-align:right;font-weight:normal;padding:0 2px">1 967 260</div>
<div class="cell" style="left:30px;top:330px;width:287px;background:#ffe699;text-align:left;font-weight:normal;padding:0 2px">Кроссовки беговые, размер 40</div>
<div class="cell" style="left:318px;top:330px;width:99px;background:#fff;text-align:center;font-weight:normal;padding:0 2px">женский</div>
<div class="cell" style="left:418px;top:330px;width:97px;background:#fff;text-align:center;font-weight:normal;padding:0 2px">бег</div>
<div class="cell" style="left:516px;top:330px;width:107px;background:#fff;text-align:right;font-weight:normal;padding:0 2px">321</div>
<div class="cell" style="left:624px;top:330px;width:100px;background:#fff;text-align:right;font-weight:normal;padding:0 2px">6 490</div>
<div class="cell" style="left:725px;top:330px;width:79px;background:#fff;text-align:right;font-weight:normal;padding:0 2px">2 083 290</div>
<div class="cell" style="left:30px;top:351px;width:287px;background:#ffe699;text-align:left;font-weight:normal;padding:0 2px">Кроссовки беговые, размер 40</div>
<div class="cell" style="left:318px;top:351px;width:99px;background:#fff;text-align:center;font-weight:normal;padding:0 2px">мужской</div>
<div class="cell" style="left:418px;top:351px;width:97px;background:#fff;text-align:center;font-weight:normal;padding:0 2px">бег</div>
<div class="cell" style="left:516px;top:351px;width:107px;background:#fff;text-align:right;font-weight:normal;padding:0 2px">500</div>
<div class="cell" style="left:624px;top:351px;width:100px;background:#fff;text-align:right;font-weight:normal;padding:0 2px">6 990</div>
<div class="cell" style="left:725px;top:351px;width:79px;background:#fff;text-align:right;font-weight:normal;padding:0 2px">3 495 000</div>
<div class="cell" style="left:30px;top:372px;width:287px;background:#ffe699;text-align:left;font-weight:normal;padding:0 2px">Кроссовки беговые, размер 41</div>
<div class="cell" style="left:318px;top:372px;width:99px;background:#fff;text-align:center;font-weight:normal;padding:0 2px">мужской</div>
<div class="cell" style="left:418px;top:372px;width:97px;background:#fff;text-align:center;font-weight:normal;padding:0 2px">бег</div>
<div class="cell" style="left:516px;top:372px;width:107px;background:#fff;text-align:right;font-weight:normal;padding:0 2px">664</div>
<div class="cell" style="left:624px;top:372px;width:100px;background:#fff;text-align:right;font-weight:normal;padding:0 2px">6 990</div>
<div class="cell" style="left:725px;top:372px;width:79px;background:#fff;text-align:right;font-weight:normal;padding:0 2px">4 641 360</div>
<div class="cell" style="left:30px;top:393px;width:287px;background:#ffe699;text-align:left;font-weight:normal;padding:0 2px">Кроссовки теннисные, размер 41</div>
<div class="cell" style="left:318px;top:393px;width:99px;background:#fff;text-align:center;font-weight:normal;padding:0 2px">мужской</div>
<div class="cell" style="left:418px;top:393px;width:97px;background:#fff;text-align:center;font-weight:normal;padding:0 2px">теннис</div>
<div class="cell" style="left:516px;top:393px;width:107px;background:#fff;text-align:right;font-weight:normal;padding:0 2px">553</div>
<div class="cell" style="left:624px;top:393px;width:100px;background:#fff;text-align:right;font-weight:normal;padding:0 2px">7 990</div>
<div class="cell" style="left:725px;top:393px;width:79px;background:#fff;text-align:right;font-weight:normal;padding:0 2px">4 418 470</div>
<div class="cell" style="left:30px;top:414px;width:287px;background:#ffe699;text-align:left;font-weight:normal;padding:0 2px">Кроссовки теннисные, размер 42</div>
<div class="cell" style="left:318px;top:414px;width:99px;background:#fff;text-align:center;font-weight:normal;padding:0 2px">мужской</div>
<div class="cell" style="left:418px;top:414px;width:97px;background:#fff;text-align:center;font-weight:normal;padding:0 2px">теннис</div>
<div class="cell" style="left:516px;top:414px;width:107px;background:#fff;text-align:right;font-weight:normal;padding:0 2px">123</div>
<div class="cell" style="left:624px;top:414px;width:100px;background:#fff;text-align:right;font-weight:normal;padding:0 2px">7 990</div>
<div class="cell" style="left:725px;top:414px;width:79px;background:#fff;text-align:right;font-weight:normal;padding:0 2px">982 770</div>
<div class="cell" style="left:30px;top:435px;width:287px;background:#ffe699;text-align:left;font-weight:normal;padding:0 2px">Кроссовки беговые, размер 42</div>
<div class="cell" style="left:318px;top:435px;width:99px;background:#fff;text-align:center;font-weight:normal;padding:0 2px">мужской</div>
<div class="cell" style="left:418px;top:435px;width:97px;background:#fff;text-align:center;font-weight:normal;padding:0 2px">бег</div>
<div class="cell" style="left:516px;top:435px;width:107px;background:#fff;text-align:right;font-weight:normal;padding:0 2px">334</div>
<div class="cell" style="left:624px;top:435px;width:100px;background:#fff;text-align:right;font-weight:normal;padding:0 2px">6 990</div>
<div class="cell" style="left:725px;top:435px;width:79px;background:#fff;text-align:right;font-weight:normal;padding:0 2px">2 334 660</div>
<div class="cell" style="left:30px;top:456px;width:287px;background:#ffe699;text-align:left;font-weight:normal;padding:0 2px">Кроссовки беговые, размер 44</div>
<div class="cell" style="left:318px;top:456px;width:99px;background:#fff;text-align:center;font-weight:normal;padding:0 2px">мужской</div>
<div class="cell" style="left:418px;top:456px;width:97px;background:#fff;text-align:center;font-weight:normal;padding:0 2px">бег</div>
<div class="cell" style="left:516px;top:456px;width:107px;background:#fff;text-align:right;font-weight:normal;padding:0 2px">222</div>
<div class="cell" style="left:624px;top:456px;width:100px;background:#fff;text-align:right;font-weight:normal;padding:0 2px">6 990</div>
<div class="cell" style="left:725px;top:456px;width:79px;background:#fff;text-align:right;font-weight:normal;padding:0 2px">1 551 780</div>
<div class="cell" style="left:30px;top:477px;width:287px;background:#ffe699;text-align:left;font-weight:normal;padding:0 2px">Кроссовки беговые, размер 45</div>
<div class="cell" style="left:318px;top:477px;width:99px;background:#fff;text-align:center;font-weight:normal;padding:0 2px">мужской</div>
<div class="cell" style="left:418px;top:477px;width:97px;background:#fff;text-align:center;font-weight:normal;padding:0 2px">бег</div>
<div class="cell" style="left:516px;top:477px;width:107px;background:#fff;text-align:right;font-weight:normal;padding:0 2px">221</div>
<div class="cell" style="left:624px;top:477px;width:100px;background:#fff;text-align:right;font-weight:normal;padding:0 2px">6 990</div>
<div class="cell" style="left:725px;top:477px;width:79px;background:#fff;text-align:right;font-weight:normal;padding:0 2px">1 544 790</div>
<div class="cell" style="left:30px;top:498px;width:287px;background:#ffe699;text-align:left;font-weight:normal;padding:0 2px">Кроссовки теннисные, размер 38</div>
<div class="cell" style="left:318px;top:498px;width:99px;background:#fff;text-align:center;font-weight:normal;padding:0 2px">женский</div>
<div class="cell" style="left:418px;top:498px;width:97px;background:#fff;text-align:center;font-weight:normal;padding:0 2px">теннис</div>
<div class="cell" style="left:516px;top:498px;width:107px;background:#fff;text-align:right;font-weight:normal;padding:0 2px">443</div>
<div class="cell" style="left:624px;top:498px;width:100px;background:#fff;text-align:right;font-weight:normal;padding:0 2px">7 990</div>
<div class="cell" style="left:725px;top:498px;width:79px;background:#fff;text-align:right;font-weight:normal;padding:0 2px">3 539 570</div>
<div class="cell" style="left:30px;top:519px;width:287px;background:#ffe699;text-align:left;font-weight:normal;padding:0 2px">Кроссовки беговые, размер 35</div>
<div class="cell" style="left:318px;top:519px;width:99px;background:#fff;text-align:center;font-weight:normal;padding:0 2px">женский</div>
<div class="cell" style="left:418px;top:519px;width:97px;background:#fff;text-align:center;font-weight:normal;padding:0 2px">бег</div>
<div class="cell" style="left:516px;top:519px;width:107px;background:#fff;text-align:right;font-weight:normal;padding:0 2px">241</div>
<div class="cell" style="left:624px;top:519px;width:100px;background:#fff;text-align:right;font-weight:normal;padding:0 2px">6 490</div>
<div class="cell" style="left:725px;top:519px;width:79px;background:#fff;text-align:right;font-weight:normal;padding:0 2px">1 564 090</div>
<div class="cell" style="left:30px;top:540px;width:287px;background:#ffe699;text-align:left;font-weight:normal;padding:0 2px">Кроссовки теннисные, размер 43</div>
<div class="cell" style="left:318px;top:540px;width:99px;background:#fff;text-align:center;font-weight:normal;padding:0 2px">мужской</div>
<div class="cell" style="left:418px;top:540px;width:97px;background:#fff;text-align:center;font-weight:normal;padding:0 2px">теннис</div>
<div class="cell" style="left:516px;top:540px;width:107px;background:#fff;text-align:right;font-weight:normal;padding:0 2px">543</div>
<div class="cell" style="left:624px;top:540px;width:100px;background:#fff;text-align:right;font-weight:normal;padding:0 2px">7 990</div>
<div class="cell" style="left:725px;top:540px;width:79px;background:#fff;text-align:right;font-weight:normal;padding:0 2px">4 338 570</div>
<div class="cell" style="left:30px;top:561px;width:287px;background:#ffe699;text-align:left;font-weight:normal;padding:0 2px">Кроссовки беговые, размер 36</div>
<div class="cell" style="left:318px;top:561px;width:99px;background:#fff;text-align:center;font-weight:normal;padding:0 2px">женский</div>
<div class="cell" style="left:418px;top:561px;width:97px;background:#fff;text-align:center;font-weight:normal;padding:0 2px">бег</div>
<div class="cell" style="left:516px;top:561px;width:107px;background:#fff;text-align:right;font-weight:normal;padding:0 2px">332</div>
<div class="cell" style="left:624px;top:561px;width:100px;background:#fff;text-align:right;font-weight:normal;padding:0 2px">6 490</div>
<div class="cell" style="left:725px;top:561px;width:79px;background:#fff;text-align:right;font-weight:normal;padding:0 2px">2 154 680</div>
<div class="cell" style="left:30px;top:582px;width:287px;background:#ffe699;text-align:left;font-weight:normal;padding:0 2px">Кроссовки беговые, размер 37</div>
<div class="cell" style="left:318px;top:582px;width:99px;background:#fff;text-align:center;font-weight:normal;padding:0 2px">женский</div>
<div class="cell" style="left:418px;top:582px;width:97px;background:#fff;text-align:center;font-weight:normal;padding:0 2px">бег</div>
<div class="cell" style="left:516px;top:582px;width:107px;background:#fff;text-align:right;font-weight:normal;padding:0 2px">333</div>
<div class="cell" style="left:624px;top:582px;width:100px;background:#fff;text-align:right;font-weight:normal;padding:0 2px">6 490</div>
<div class="cell" style="left:725px;top:582px;width:79px;background:#fff;text-align:right;font-weight:normal;padding:0 2px">2 161 170</div>
<div class="cell" style="left:30px;top:603px;width:287px;background:#ffe699;text-align:left;font-weight:normal;padding:0 2px">Кроссовки беговые, размер 38</div>
<div class="cell" style="left:318px;top:603px;width:99px;background:#fff;text-align:center;font-weight:normal;padding:0 2px">женский</div>
<div class="cell" style="left:418px;top:603px;width:97px;background:#fff;text-align:center;font-weight:normal;padding:0 2px">бег</div>
<div class="cell" style="left:516px;top:603px;width:107px;background:#fff;text-align:right;font-weight:normal;padding:0 2px">421</div>
<div class="cell" style="left:624px;top:603px;width:100px;background:#fff;text-align:right;font-weight:normal;padding:0 2px">6 490</div>
<div class="cell" style="left:725px;top:603px;width:79px;background:#fff;text-align:right;font-weight:normal;padding:0 2px">2 732 290</div>
<div class="cell" style="left:30px;top:624px;width:287px;background:#ffe699;text-align:left;font-weight:normal;padding:0 2px">Кроссовки беговые, размер 38</div>
<div class="cell" style="left:318px;top:624px;width:99px;background:#fff;text-align:center;font-weight:normal;padding:0 2px">мужской</div>
<div class="cell" style="left:418px;top:624px;width:97px;background:#fff;text-align:center;font-weight:normal;padding:0 2px">бег</div>
<div class="cell" style="left:516px;top:624px;width:107px;background:#fff;text-align:right;font-weight:normal;padding:0 2px">220</div>
<div class="cell" style="left:624px;top:624px;width:100px;background:#fff;text-align:right;font-weight:normal;padding:0 2px">6 990</div>
<div class="cell" style="left:725px;top:624px;width:79px;background:#fff;text-align:right;font-weight:normal;padding:0 2px">1 537 800</div>
<div class="cell" style="left:30px;top:645px;width:287px;background:#ffe699;text-align:left;font-weight:normal;padding:0 2px">Кроссовки теннисные, размер 39</div>
<div class="cell" style="left:318px;top:645px;width:99px;background:#fff;text-align:center;font-weight:normal;padding:0 2px">женский</div>
<div class="cell" style="left:418px;top:645px;width:97px;background:#fff;text-align:center;font-weight:normal;padding:0 2px">теннис</div>
<div class="cell" style="left:516px;top:645px;width:107px;background:#fff;text-align:right;font-weight:normal;padding:0 2px">554</div>
<div class="cell" style="left:624px;top:645px;width:100px;background:#fff;text-align:right;font-weight:normal;padding:0 2px">7 990</div>
<div class="cell" style="left:725px;top:645px;width:79px;background:#fff;text-align:right;font-weight:normal;padding:0 2px">4 426 460</div>
<div class="a" style="left:29px;top:245px;width:776px;height:1px;background:#000"></div>
<div class="a" style="left:29px;top:266px;width:776px;height:1px;background:#000"></div>
<div class="a" style="left:29px;top:287px;width:776px;height:1px;background:#000"></div>
<div class="a" style="left:29px;top:308px;width:776px;height:1px;background:#000"></div>
<div class="a" style="left:29px;top:329px;width:776px;height:1px;background:#000"></div>
<div class="a" style="left:29px;top:350px;width:776px;height:1px;background:#000"></div>
<div class="a" style="left:29px;top:371px;width:776px;height:1px;background:#000"></div>
<div class="a" style="left:29px;top:392px;width:776px;height:1px;background:#000"></div>
<div class="a" style="left:29px;top:413px;width:776px;height:1px;background:#000"></div>
<div class="a" style="left:29px;top:434px;width:776px;height:1px;background:#000"></div>
<div class="a" style="left:29px;top:455px;width:776px;height:1px;background:#000"></div>
<div class="a" style="left:29px;top:476px;width:776px;height:1px;background:#000"></div>
<div class="a" style="left:29px;top:497px;width:776px;height:1px;background:#000"></div>
<div class="a" style="left:29px;top:518px;width:776px;height:1px;background:#000"></div>
<div class="a" style="left:29px;top:539px;width:776px;height:1px;background:#000"></div>
<div class="a" style="left:29px;top:560px;width:776px;height:1px;background:#000"></div>
<div class="a" style="left:29px;top:581px;width:776px;height:1px;background:#000"></div>
<div class="a" style="left:29px;top:602px;width:776px;height:1px;background:#000"></div>
<div class="a" style="left:29px;top:623px;width:776px;height:1px;background:#000"></div>
<div class="a" style="left:29px;top:644px;width:776px;height:1px;background:#000"></div>
<div class="a" style="left:29px;top:665px;width:776px;height:1px;background:#000"></div>
<div class="a" style="left:317px;top:225px;width:1px;height:442px;background:#000"></div>
<div class="a" style="left:417px;top:225px;width:1px;height:442px;background:#000"></div>
<div class="a" style="left:515px;top:225px;width:1px;height:442px;background:#000"></div>
<div class="a" style="left:623px;top:225px;width:1px;height:442px;background:#000"></div>
<div class="a" style="left:724px;top:225px;width:1px;height:442px;background:#000"></div>
<div class="a" style="left:804px;top:225px;width:1px;height:442px;background:#000"></div>
<div class="a" style="left:316px;top:307px;width:103px;height:24px;border:2px solid #007642"></div>
<div class="a" style="left:414px;top:326px;width:7px;height:7px;background:#007642;border:1px solid #fff"></div>
<!-- sheet bar -->
<div class="a" style="left:1px;top:667px;width:1094px;height:28px;background:#e6e6e6"></div>
<div class="a" style="left:1px;top:667px;width:1094px;height:1px;background:#c6c6c6"></div>
<svg style="left:27px;top:676px" width="6" height="9" viewBox="0 0 6 9"><path d="M5 0.5V8.5L0.6 4.5Z" fill="#c0c0c0"/></svg>
<svg style="left:56px;top:676px" width="6" height="9" viewBox="0 0 6 9"><path d="M0.8 0.5V8.5L5.2 4.5Z" fill="#c0c0c0"/></svg>
<div class="a" style="left:101px;top:667px;width:107px;height:24px;background:#fff;border-left:1px solid #c6c6c6;border-right:1px solid #c6c6c6"></div>
<div class="a" style="left:101px;top:690px;width:107px;height:2px;background:#007642"></div>
<div class="a" style="left:113px;top:674px;font-size:12.7px;font-weight:bold;color:#007642;line-height:15px">microexcel.ru</div>
<svg style="left:240px;top:672px" width="18" height="18" viewBox="0 0 18 18"><circle cx="8.8" cy="8.8" r="7.4" fill="none" stroke="#777" stroke-width="1.2"/><path d="M8.8 4.6V13M4.6 8.8H13" stroke="#777" stroke-width="1.6"/></svg>
<svg style="left:656px;top:676px" width="4" height="12" viewBox="0 0 4 12"><rect x="1" y="0.5" width="1.6" height="1.6" fill="#b0b0b0"/><rect x="1" y="4.7" width="1.6" height="1.6" fill="#b0b0b0"/><rect x="1" y="8.9" width="1.6" height="1.6" fill="#b0b0b0"/></svg>
<div class="a" style="left:674px;top:674px;width:400px;height:15px;background:#dadada;border:1px solid #c6c6c6"></div>
<div class="a" style="left:674px;top:674px;width:15px;height:15px;background:#fff;border:1px solid #c6c6c6"></div>
<svg style="left:678px;top:677px" width="6" height="9" viewBox="0 0 6 9"><path d="M4.8 0.5V8.5L0.8 4.5Z" fill="#6d6d6d"/></svg>
<div class="a" style="left:689px;top:674px;width:328px;height:15px;background:#fff;border:1px solid #c6c6c6"></div>
<div class="a" style="left:1059px;top:674px;width:15px;height:15px;background:#fff;border:1px solid #c6c6c6"></div>
<svg style="left:1064px;top:677px" width="6" height="9" viewBox="0 0 6 9"><path d="M1 0.5V8.5L5 4.5Z" fill="#6d6d6d"/></svg>
<div class="a" style="left:1077px;top:206px;width:15px;height:462px;background:#dadada;border:1px solid #c6c6c6"></div>
<div class="a" style="left:1077px;top:206px;width:15px;height:15px;background:#fff;border:1px solid #c6c6c6"></div>
<svg style="left:1080px;top:210px" width="9" height="6" viewBox="0 0 9 6"><path d="M0.5 5H8.5L4.5 1Z" fill="#6d6d6d"/></svg>
<div class="a" style="left:1077px;top:222px;width:15px;height:264px;background:#fff;border:1px solid #c6c6c6"></div>
<div class="a" style="left:1077px;top:653px;width:15px;height:15px;background:#fff;border:1px solid #c6c6c6"></div>
<svg style="left:1080px;top:657px" width="9" height="6" viewBox="0 0 9 6"><path d="M0.5 1H8.5L4.5 5Z" fill="#6d6d6d"/></svg>
<!-- status bar -->
<div class="a" style="left:1px;top:695px;width:1094px;height:22px;background:#f3f3f3;border-top:1px solid #d5d5d5"></div>
<svg style="left:8px;top:698px" width="16" height="15" viewBox="8 698 16 15">
<circle cx="12" cy="701.8" r="2.8" fill="#666"/>
<rect x="16.2" y="700.1" width="5.6" height="2.5" fill="#666"/>
<path d="M10.6 706.2V711.3H21.2V702" fill="none" stroke="#666" stroke-width="1.2"/>
<path d="M14.6 705.5H16.2M17.6 705.5H19.2M11.6 707.5H13.2M14.6 707.5H16.2M17.6 707.5H19.2M11.6 709.5H13.2M14.6 709.5H16.2M17.6 709.5H19.2" stroke="#666" stroke-width="1"/>
</svg>
<div class="a" style="left:795px;top:696px;width:38px;height:21px;background:#c6c6c6"></div>
<svg style="left:805px;top:697px" width="100" height="18" viewBox="805 697 100 18">
<rect x="808" y="699.5" width="12" height="12" fill="none" stroke="#6d6d6d" stroke-width="1"/>
<path d="M812 699.5V711.5M816 699.5V711.5M808 703.5H820M808 707.5H820" stroke="#6d6d6d" stroke-width="1"/>
<rect x="845.5" y="699.5" width="13" height="12.5" fill="none" stroke="#6d6d6d" stroke-width="1"/>
<path d="M848.5 702.5H855.5M848.5 705H855.5M848.5 707.5H855.5M848.5 710H855.5" stroke="#6d6d6d" stroke-width="1"/>
<path d="M883 699.5H897V711.5H883ZM887.5 699.5V705.5H897" fill="none" stroke="#6d6d6d" stroke-width="1"/>
</svg>
<div class="a" style="left:914px;top:705px;width:6px;height:2px;background:#444"></div>
<div class="a" style="left:925px;top:705px;width:99px;height:1px;background:#a0a0a0"></div>
<div class="a" style="left:972px;top:700px;width:5px;height:12px;background:#6d6d6d"></div>
<svg style="left:1027px;top:701px" width="9" height="9" viewBox="0 0 9 9"><path d="M4.5 0.5V8.5M0.5 4.5H8.5" stroke="#444" stroke-width="1.8"/></svg>
<div class="a" style="left:1047px;top:699px;font-size:11.2px;letter-spacing:-0.3px;color:#444;line-height:14px">100 %</div>
<!-- window border -->
<div class="a" style="left:0;top:0;width:1px;height:718px;background:#007642"></div>
<div class="a" style="left:1095px;top:0;width:1px;height:718px;background:#007642"></div>
<div class="a" style="left:0;top:717px;width:1096px;height:1px;background:#007642"></div>
</body></html>
